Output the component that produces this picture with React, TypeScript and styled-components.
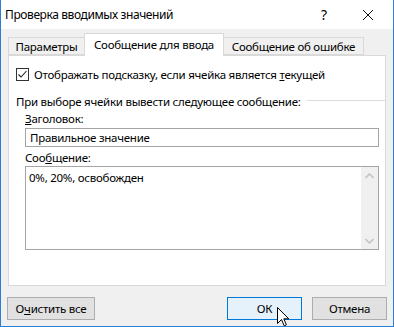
import styled, { createGlobalStyle } from "styled-components";

const GlobalStyle = createGlobalStyle`
  html, body {
    margin: 0;
    padding: 0;
    background: #ffffff;
  }
  * {
    box-sizing: border-box;
  }
`;

type TabProps = {
  active?: boolean;
};
type ButtonProps = {
  width: number;
  primary?: boolean;
};

const Window = styled.div`
  position: relative;
  width: 394px;
  height: 327px;
  display: flex;
  flex-direction: column;
  overflow: hidden;
  border: 1px solid #2b7fd3;
  border-top: none;
  font-family: "Noto Sans", "Open Sans", sans-serif;
  font-size: 11.5px;
  letter-spacing: -0.25px;
  color: #000;
`;
const TitleBar = styled.div`
  height: 29px;
  display: flex;
  align-items: center;
  background: #fff;
  padding-left: 4px;
`;
const Title = styled.div`
  flex: 1;
  font-size: 12px;
  letter-spacing: -0.4px;
`;
const HelpButton = styled.div`
  width: 24px;
  font-size: 14px;
  text-align: center;
  margin-right: 26px;
`;
const CloseButton = styled.div`
  width: 12px;
  height: 12px;
  margin-right: 19px;
  display: flex;
`;
const Body = styled.div`
  flex: 1;
  display: flex;
  flex-direction: column;
  background: #f0f0f0;
  padding: 4px 7px 0 7px;
`;
const TabStrip = styled.div`
  display: flex;
  align-items: flex-end;
  height: 22px;
  position: relative;
  z-index: 1;
`;
const Tab = styled.div<TabProps>`
  height: ${(p) => (p.active ? "23px" : "18px")};
  margin-bottom: ${(p) => (p.active ? "-1px" : "0")};
  display: flex;
  align-items: center;
  justify-content: center;
  background: ${(p) => (p.active ? "#fff" : "#f0f0f0")};
  border: 1px solid #d9d9d9;
  border-bottom: ${(p) => (p.active ? "none" : "1px solid #d9d9d9")};
  padding-bottom: ${(p) => (p.active ? "2px" : "0")};
  white-space: nowrap;
`;
const Panel = styled.div`
  height: 231px;
  background: #fff;
  border: 1px solid #d9d9d9;
  display: flex;
  flex-direction: column;
`;
const CheckRow = styled.div`
  display: flex;
  align-items: center;
  gap: 5px;
  margin-top: 11px;
  padding-left: 7px;
  height: 14px;
`;
const Checkbox = styled.div`
  width: 13px;
  height: 13px;
  border: 1px solid #333;
  background: #fff;
  display: flex;
`;
const GroupHeader = styled.div`
  display: flex;
  align-items: center;
  margin-top: 12px;
  padding-left: 7px;
  height: 16px;
`;
const GroupLine = styled.div`
  flex: 1;
  height: 1px;
  background: #dcdcdc;
  margin-left: 6px;
  margin-top: -2px;
`;
const Fields = styled.div`
  display: flex;
  flex-direction: column;
  padding-left: 16px;
  width: 370px;
`;
const Label = styled.div`
  height: 16px;
  line-height: 16px;
  margin-top: 2px;
`;
const Input = styled.div`
  height: 19px;
  border: 1px solid #a5a5a5;
  margin-top: 1px;
  padding-left: 4px;
  line-height: 17px;
`;
const TextArea = styled.div`
  height: 84px;
  border: 1px solid #a5a5a5;
  display: flex;
  padding: 0 0 0 3px;
`;
const AreaText = styled.div`
  flex: 1;
  padding-top: 3px;
`;
const ScrollBar = styled.div`
  width: 17px;
  background: #f0f0f0;
  display: flex;
  flex-direction: column;
  justify-content: space-between;
  align-items: center;
  padding: 6px 0 5px 0;
`;
const ButtonRow = styled.div`
  display: flex;
  margin-top: 11px;
  margin-left: -1px;
  margin-right: -1px;
  gap: 10px;
`;
const Spacer = styled.div`
  flex: 1;
`;
const Button = styled.div<ButtonProps>`
  width: ${(p) => p.width}px;
  height: 23px;
  display: flex;
  align-items: center;
  justify-content: center;
  background: ${(p) => (p.primary ? "#e5f1fb" : "#e1e1e1")};
  border: 1px solid ${(p) => (p.primary ? "#0078d7" : "#adadad")};
`;
const Cursor = styled.svg`
  position: absolute;
  left: 276px;
  top: 307px;
`;

const Chevron = ({ up }: { up?: boolean }) => (
  <svg width="9" height="6" viewBox="0 0 9 6">
    <path
      d={up ? "M0.5 5 L4.5 1 L8.5 5" : "M0.5 1 L4.5 5 L8.5 1"}
      fill="none"
      stroke="#c4c4c4"
      strokeWidth="1.6"
    />
  </svg>
);

const App = () => {
  return (
    <>
      <GlobalStyle />
      <Window>
        <TitleBar>
          <Title>Проверка вводимых значений</Title>
          <HelpButton>?</HelpButton>
          <CloseButton>
            <svg width="12" height="12" viewBox="0 0 12 12">
              <path d="M1 1 L11 11 M11 1 L1 11" stroke="#111" strokeWidth="1" />
            </svg>
          </CloseButton>
        </TitleBar>
        <Body>
          <TabStrip>
            <Tab style={{ width: 77 }}>Параметры</Tab>
            <Tab active style={{ width: 140, marginLeft: -1 }}>
              Сообщение для ввода
            </Tab>
            <Tab style={{ width: 141, marginLeft: -1 }}>Сообщение об ошибке</Tab>
          </TabStrip>
          <Panel>
            <CheckRow>
              <Checkbox>
                <svg width="11" height="11" viewBox="0 0 11 11">
                  <path d="M1.5 5.5 L4 8 L9.5 2" fill="none" stroke="#222" strokeWidth="1.1" />
                </svg>
              </Checkbox>
              <span>
                Отображать подсказку, если ячейка является <u>т</u>екущей
              </span>
            </CheckRow>
            <GroupHeader>
              <span>При выборе ячейки вывести следующее сообщение:</span>
              <GroupLine />
            </GroupHeader>
            <Fields>
              <Label>
                <u>З</u>аголовок:
              </Label>
              <Input>Правильное значение</Input>
              <Label style={{ marginTop: 3 }}>
                Соо<u>б</u>щение:
              </Label>
              <TextArea>
                <AreaText>0%, 20%, освобожден</AreaText>
                <ScrollBar>
                  <Chevron up />
                  <Chevron />
                </ScrollBar>
              </TextArea>
            </Fields>
          </Panel>
          <ButtonRow>
            <Button width={88}>
              О<u>ч</u>истить все
            </Button>
            <Spacer />
            <Button width={75} primary>
              ОК
            </Button>
            <Button width={75}>Отмена</Button>
          </ButtonRow>
        </Body>
        <Cursor width="13" height="21" viewBox="0 0 13 21">
          <path
            d="M0.5 0.5 L0.5 16.5 L4.5 12.5 L7.2 18.8 L9.4 17.8 L6.8 11.8 L11.8 11.8 Z"
            fill="#fff"
            stroke="#000"
            strokeWidth="1"
          />
        </Cursor>
      </Window>
    </>
  );
};

export default App;
